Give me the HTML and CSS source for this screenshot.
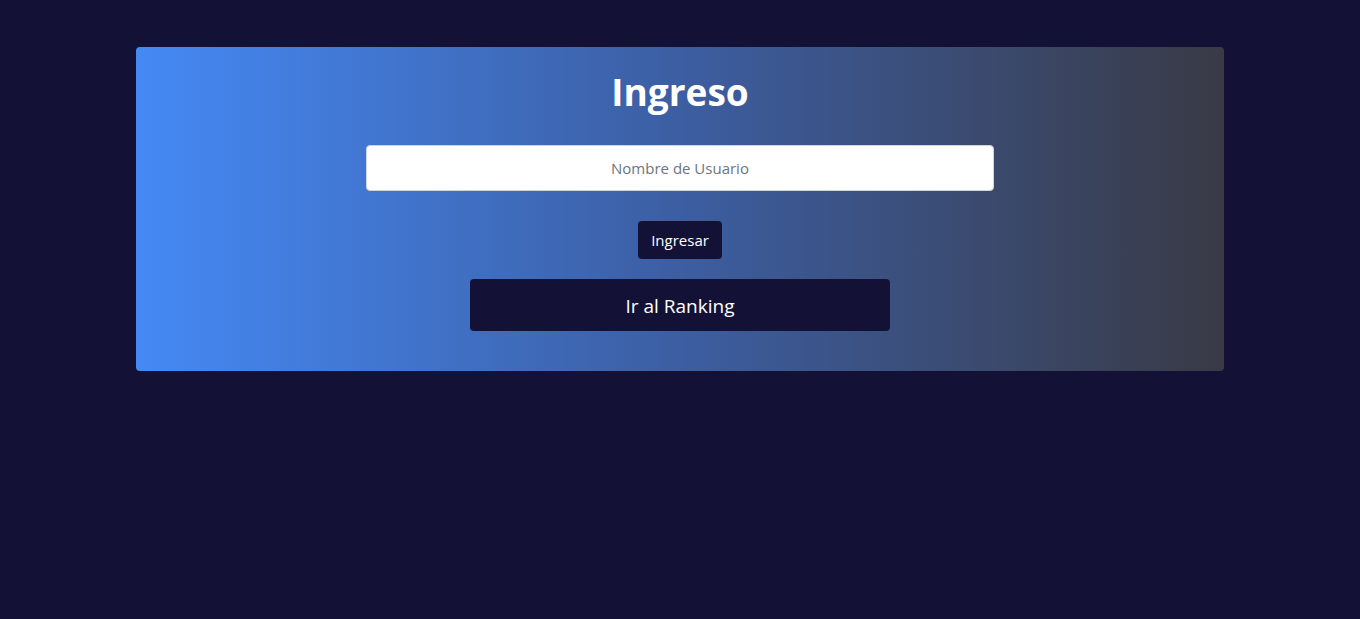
FILE: index.html
```html
<!DOCTYPE html>
<html lang="es">
<head>
<meta charset="utf-8">
<title>Ingreso</title>
<link rel="stylesheet" href="styles.css">
</head>
<body>
<main class="page">
  <section class="card">
    <h1 class="title">Ingreso</h1>
    <input class="field" type="text" placeholder="Nombre de Usuario">
    <button class="btn btn-small" type="button">Ingresar</button>
    <button class="btn btn-wide" type="button">Ir al Ranking</button>
  </section>
</main>
</body>
</html>
```
FILE: styles.css
```css
* { box-sizing: border-box; }
html, body {
  margin: 0;
  padding: 0;
  background: #131236;
  height: 100%;
}
body {
  font-family: "Open Sans", "Noto Sans", sans-serif;
  color: #fff;
}
.page {
  padding-top: 47px;
  display: flex;
  justify-content: center;
}
.card {
  width: 1088px;
  border-radius: 4px;
  background: linear-gradient(to right, #4589f5 0%, #3c5ea2 50%, #393a45 100%);
  padding: 21px 0 40px;
  display: flex;
  flex-direction: column;
  align-items: center;
}
.title {
  margin: 0 0 29px;
  font-size: 37px;
  line-height: 48px;
  font-weight: 700;
  color: #fff;
}
.field {
  width: 628px;
  height: 46px;
  border: 1px solid #ced4da;
  border-radius: 4px;
  background: #fff;
  text-align: center;
  font-family: inherit;
  font-size: 15px;
  color: #495057;
  margin-bottom: 30px;
}
.field::placeholder { color: #6c757d; }
.btn {
  background: #131236;
  color: #fff;
  border: 0;
  border-radius: 4px;
  font-family: inherit;
  cursor: pointer;
}
.btn-small {
  width: 84px;
  height: 38px;
  font-size: 15px;
  margin-bottom: 20px;
}
.btn-wide {
  width: 420px;
  height: 52px;
  font-size: 19px;
  padding-top: 2px;
}
```
